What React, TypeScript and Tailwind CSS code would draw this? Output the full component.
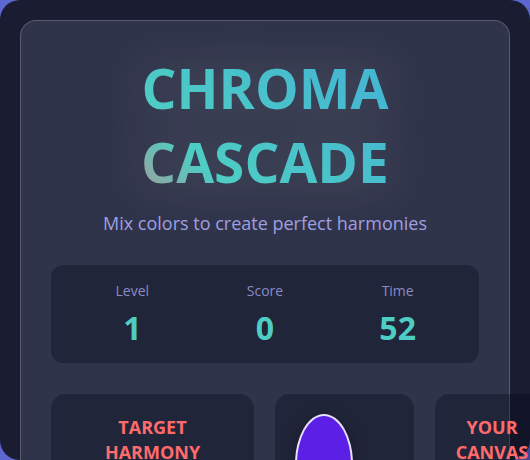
import React from "react";

const stats = [
  { label: "Level", value: "1" },
  { label: "Score", value: "0" },
  { label: "Time", value: "52" },
];

export default function App() {
  return (
    <div className="h-[460px] w-[530px] overflow-hidden bg-[#5c67cf] font-['Open_Sans',sans-serif]">
      <div className="h-[460px] rounded-[20px] bg-[#1a1c31] p-5">
        <div className="rounded-[16px] border border-white/20 bg-[#30344a] p-[30px] text-center">
          {/* Title */}
          <h1 className="bg-[linear-gradient(45deg,#ff6b6b_0%,#4ecdc4_32%,#45b7d1_75%)] bg-clip-text text-[55px] font-bold leading-[74px] text-transparent drop-shadow-[0_0_25px_rgba(255,255,255,0.2)]">
            CHROMA
            <br />
            CASCADE
          </h1>
          <p className="mt-[11px] text-[18px] leading-[27px] text-[#9f9fe0]">
            Mix colors to create perfect harmonies
          </p>

          {/* Stats */}
          <div className="mt-[28px] grid grid-cols-3 rounded-[12px] bg-[rgba(0,2,20,0.3)] px-[15px] pt-[16px] pb-[15px]">
            {stats.map((s) => (
              <div key={s.label} className="flex flex-col items-center">
                <span className="text-[14px] leading-5 text-[#8b8bc7]">{s.label}</span>
                <span className="mt-[7px] text-[32px] font-bold leading-10 text-[#4ecdc4]">
                  {s.value}
                </span>
              </div>
            ))}
          </div>

          {/* Panels */}
          <div className="mt-[31px] flex gap-[21px] text-left">
            <div className="w-[203px] shrink-0 rounded-[15px] bg-[rgba(0,2,20,0.3)] px-5 pt-[21px] pb-8">
              <h3 className="text-center text-[18px] font-bold leading-[25px] text-[#ff6b6b]">
                TARGET
                <br />
                HARMONY
              </h3>
            </div>
            <div className="w-[139px] shrink-0 rounded-[15px] bg-[rgba(0,2,20,0.3)] p-5">
              <div className="h-[100px] w-[58px] rounded-[50%] border-2 border-[#e6e0ff] bg-[#5b1fe5] shadow-[0_4px_15px_rgba(0,0,0,0.35)]"></div>
            </div>
            <div className="w-[114px] shrink-0 rounded-[15px] bg-[rgba(0,2,20,0.3)] px-5 pt-[21px] pb-8">
              <h3 className="text-center text-[18px] font-bold leading-[25px] text-[#ff6b6b]">
                YOUR
                <br />
                CANVAS
              </h3>
            </div>
          </div>
        </div>
      </div>
    </div>
  );
}
